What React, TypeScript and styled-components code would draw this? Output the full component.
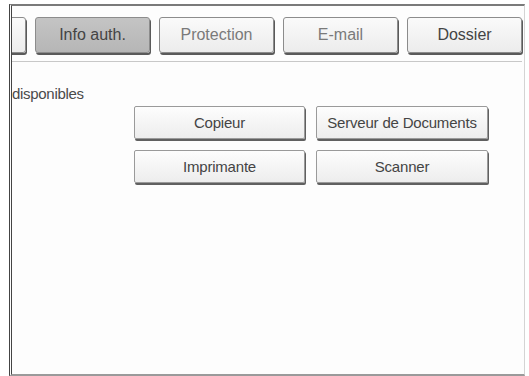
import { createGlobalStyle, styled } from 'styled-components';

const GlobalStyle = createGlobalStyle`
  html, body {
    margin: 0;
    padding: 0;
    background: #ffffff;
  }
  body {
    font-family: 'Liberation Sans', Arial, sans-serif;
  }
`;

const Frame = styled.div`
  margin: 4px 4px 0 9px;
  height: 368px;
  border-top: 2px solid #7a7a7a;
  border-left: 3px double #444;
  border-bottom: 2px solid #9a9a9a;
  border-right: 1px solid #d4d4d4;
  background: #fdfdfd;
  display: flex;
  flex-direction: column;
`;

const TabStrip = styled.div`
  display: flex;
  justify-content: flex-end;
  gap: 9px;
  padding: 11px 2px 0 0;
  overflow: hidden;
  height: 38px;
`;

const Tab = styled.div<{ $selected?: boolean; $dim?: boolean }>`
  flex-shrink: 0;
  width: 113px;
  height: 34px;
  border: 1px solid #8c8c8c;
  border-radius: 3px;
  box-shadow: 1px 2px 0 #5a5a5a;
  background: ${(p) =>
    p.$selected
      ? 'linear-gradient(#c4c4c4, #b6b6b6)'
      : 'linear-gradient(#fafafa, #ececec)'};
  color: ${(p) => (p.$dim ? '#7a7a7a' : '#444')};
  font-size: 16px;
  display: flex;
  align-items: center;
  justify-content: center;
`;

const Divider = styled.div`
  height: 1px;
  margin-top: 6px;
  background: #c8c8c8;
  margin-right: 2px;
`;

const Content = styled.div`
  display: flex;
  flex-direction: column;
  padding-top: 23px;
`;

const Label = styled.div`
  font-size: 15px;
  line-height: 18px;
  color: #4a4a4a;
  letter-spacing: -0.3px;
`;

const ButtonGrid = styled.div`
  display: grid;
  grid-template-columns: 171px 172px;
  grid-auto-rows: 33px;
  column-gap: 11px;
  row-gap: 11px;
  margin: 3px 0 0 122px;
`;

const FuncButton = styled.div`
  border: 1px solid #9a9a9a;
  border-radius: 2px;
  box-shadow: 1px 2px 0 #606060;
  background: linear-gradient(#fdfdfd, #ededed);
  color: #444;
  font-size: 15px;
  letter-spacing: -0.2px;
  display: flex;
  align-items: center;
  justify-content: center;
  white-space: nowrap;
`;

const tabs = [
  { key: 'hidden', label: '' },
  { key: 'auth', label: 'Info auth.', selected: true },
  { key: 'prot', label: 'Protection', dim: true },
  { key: 'mail', label: 'E-mail', dim: true },
  { key: 'dir', label: 'Dossier' },
];

const functions = ['Copieur', 'Serveur de Documents', 'Imprimante', 'Scanner'];

export default function App() {
  return (
    <>
      <GlobalStyle />
      <Frame>
        <TabStrip>
          {tabs.map((t) => (
            <Tab key={t.key} $selected={t.selected} $dim={t.dim}>
              {t.label}
            </Tab>
          ))}
        </TabStrip>
        <Divider />
        <Content>
          <Label>disponibles</Label>
          <ButtonGrid>
            {functions.map((f) => (
              <FuncButton key={f}>{f}</FuncButton>
            ))}
          </ButtonGrid>
        </Content>
      </Frame>
    </>
  );
}
